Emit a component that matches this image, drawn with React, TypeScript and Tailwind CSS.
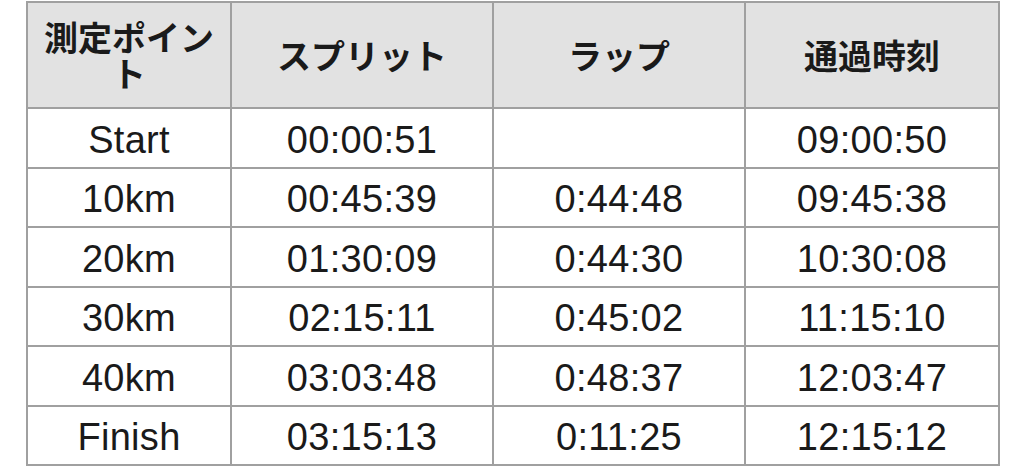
import React from "react";

const rows = [
  ["Start", "00:00:51", "", "09:00:50"],
  ["10km", "00:45:39", "0:44:48", "09:45:38"],
  ["20km", "01:30:09", "0:44:30", "10:30:08"],
  ["30km", "02:15:11", "0:45:02", "11:15:10"],
  ["40km", "03:03:48", "0:48:37", "12:03:47"],
  ["Finish", "03:15:13", "0:11:25", "12:15:12"],
];

const heads = ["測定ポイント", "スプリット", "ラップ", "通過時刻"];

const App = () => {
  return (
    <div className="w-[1024px] h-[466px] bg-white overflow-hidden text-[#1a1a1a]">
      <table className="ml-[26px] mt-[1px] w-[972px] table-fixed border-collapse border-2 border-[#a0a0a0]">
        <colgroup>
          <col className="w-[204px]" />
          <col className="w-[262px]" />
          <col className="w-[252px]" />
          <col className="w-[254px]" />
        </colgroup>
        <thead>
          <tr className="h-[106px] bg-[#e2e2e2]">
            {heads.map((h) => (
              <th
                key={h}
                className="border-2 border-[#a0a0a0] px-2 font-['Noto_Sans_CJK_JP',sans-serif] text-[34px] leading-[36px] font-bold text-center"
              >
                {h}
              </th>
            ))}
          </tr>
        </thead>
        <tbody>
          {rows.map((r) => (
            <tr key={r[0]} className="h-[59.5px]">
              {r.map((c, i) => (
                <td
                  key={i}
                  className="border-2 border-[#a0a0a0] text-center font-['Liberation_Sans',Arial,sans-serif] text-[38px] tracking-[0.3px] leading-none pt-[4px]"
                >
                  {c}
                </td>
              ))}
            </tr>
          ))}
        </tbody>
      </table>
    </div>
  );
};

export default App;
